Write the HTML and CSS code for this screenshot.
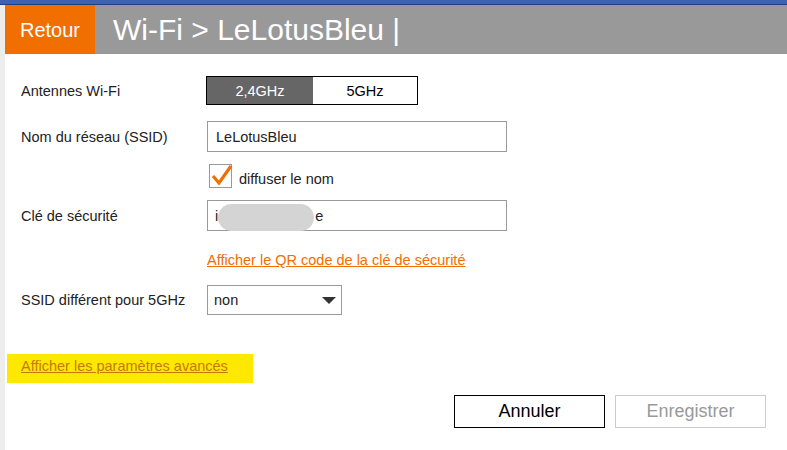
FILE: index.html
```html
<!DOCTYPE html>
<html lang="fr">
<head>
<meta charset="utf-8">
<title>Wi-Fi</title>
<link rel="stylesheet" href="styles.css">
</head>
<body>
<div class="topbar"></div>
<div class="page">
  <header class="header">
    <div class="back">Retour</div>
    <h1 class="title">Wi-Fi &gt; LeLotusBleu |</h1>
  </header>
  <main class="form">
    <div class="row row-antennes">
      <div class="label">Antennes Wi-Fi</div>
      <div class="segmented">
        <span class="seg seg-active">2,4GHz</span>
        <span class="seg">5GHz</span>
      </div>
    </div>
    <div class="row row-ssid">
      <div class="label">Nom du réseau (SSID)</div>
      <div class="input">LeLotusBleu</div>
    </div>
    <div class="row row-check">
      <div class="label"></div>
      <div class="check">
        <span class="box"><svg width="24" height="24" viewBox="0 0 24 24"><polyline points="3,13 9,20 21,3" fill="none" stroke="#f16e00" stroke-width="3.2" stroke-linejoin="miter"/></svg></span>
        <span class="check-text">diffuser le nom</span>
      </div>
    </div>
    <div class="row row-key">
      <div class="label">Clé de sécurité</div>
      <div class="input key">i<span class="blur"></span><span class="key-end">e</span></div>
    </div>
    <div class="row row-qr">
      <div class="label"></div>
      <a class="link">Afficher le QR code de la clé de sécurité</a>
    </div>
    <div class="row row-select">
      <div class="label">SSID différent pour 5GHz</div>
      <div class="select"><span>non</span><span class="arrow"></span></div>
    </div>
    <div class="advanced">
      <a class="adv-link">Afficher les paramètres avancés</a>
    </div>
    <div class="actions">
      <button class="btn btn-cancel">Annuler</button>
      <button class="btn btn-save">Enregistrer</button>
    </div>
  </main>
</div>
</body>
</html>
```
FILE: styles.css
```css
* { box-sizing: border-box; }
html, body { margin: 0; padding: 0; }
body {
  font-family: "Liberation Sans", Arial, sans-serif;
  background: #fff;
  width: 787px;
  height: 450px;
  overflow: hidden;
}
.topbar {
  height: 5px;
  background: #3d63b0;
  border-bottom: 1px solid #1f3f80;
}
.page {
  border-left: 5px solid #ededed;
  height: 445px;
}
.header {
  display: flex;
  height: 49px;
  background: #999999;
}
.back {
  width: 90px;
  background: #f16e00;
  color: #fff;
  font-size: 20px;
  display: flex;
  align-items: center;
  justify-content: center;
  padding-top: 1px;
}
.title {
  margin: 0 0 0 18px;
  color: #fff;
  font-weight: normal;
  font-size: 30px;
  line-height: 49px;
}
.form {
  padding-left: 16px;
}
.row {
  display: flex;
  align-items: center;
}
.label {
  width: 186px;
  flex: none;
  font-size: 14.5px;
  color: #222;
}
.row-antennes { margin-top: 22px; }
.segmented {
  display: flex;
  width: 212px;
  height: 29px;
  border: 1px solid #000;
  margin-left: -1px;
}
.seg {
  flex: 1;
  display: flex;
  align-items: center;
  justify-content: center;
  font-size: 14.5px;
  color: #000;
}
.seg-active {
  background: #666;
  color: #fff;
  flex: 0 0 106px;
}
.input {
  width: 300px;
  height: 31px;
  border: 1px solid #999;
  font-size: 14.5px;
  color: #222;
  padding-left: 8px;
  display: flex;
  align-items: center;
}
.row-ssid { margin-top: 16px; }
.row-check { margin-top: 12px; }
.check {
  display: flex;
  align-items: center;
  margin-left: 2px;
}
.box {
  position: relative;
  width: 23px;
  height: 24px;
  border: 1px solid #999;
}
.box svg { position: absolute; left: 0; top: -2px; }
.check-text {
  margin-left: 7px;
  font-size: 14.5px;
  color: #222;
  padding-top: 5px;
}
.row-key { margin-top: 12px; }
.key { position: relative; padding-left: 7px; }
.blur {
  display: inline-block;
  width: 96px;
  height: 27px;
  margin-top: 4px;
  border-radius: 14px;
  background: #d4d4d4;
}
.key-end { margin-left: 1px; }
.row-qr { margin-top: 21px; }
.link {
  color: #f16e00;
  text-decoration: underline;
  font-size: 14.5px;
}
.row-select { margin-top: 17px; }
.select {
  width: 135px;
  height: 30px;
  border: 1px solid #999;
  display: flex;
  align-items: center;
  justify-content: space-between;
  padding: 0 5px 0 6px;
  font-size: 14.5px;
  color: #222;
}
.arrow {
  width: 0;
  height: 0;
  border-left: 7px solid transparent;
  border-right: 7px solid transparent;
  border-top: 7px solid #333;
}
.advanced {
  margin: 39px 0 0 -14px;
  width: 246px;
  height: 29px;
  background: #ffe800;
  padding: 3px 0 0 14px;
}
.adv-link {
  color: #c47a00;
  text-decoration: underline;
  font-size: 14.5px;
}
.actions {
  display: flex;
  justify-content: flex-end;
  gap: 10px;
  margin-top: 12px;
  padding-right: 21px;
}
.btn {
  width: 151px;
  height: 33px;
  background: #fff;
  font-family: "Liberation Sans", Arial, sans-serif;
  font-size: 18px;
  padding: 0;
}
.btn-cancel { border: 1px solid #000; color: #000; }
.btn-save { border: 1px solid #ccc; color: #999; }
```
